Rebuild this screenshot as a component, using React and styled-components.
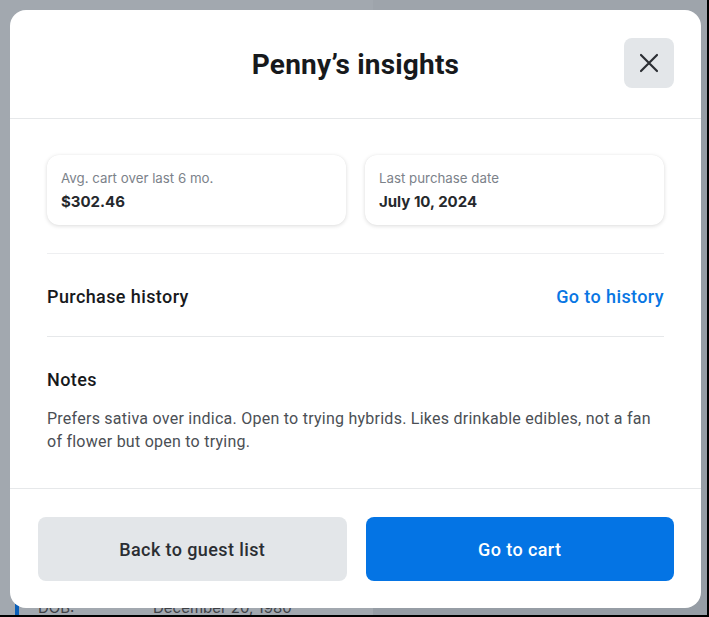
import React from "react";
import styled, { createGlobalStyle } from "styled-components";

const Global = createGlobalStyle`
  html, body { margin: 0; padding: 0; background: #000; }
  body { font-family: Roboto, "Liberation Sans", sans-serif; }
  * { box-sizing: border-box; }
`;

const Screen = styled.div`
  width: 707px;
  height: 615px;
  position: relative;
  overflow: hidden;
  background: #9ea4ab;
`;

const PageBehind = styled.div`
  position: absolute;
  inset: 0;
  display: flex;
`;

const BehindMain = styled.div`
  width: 373px;
  display: flex;
  flex-direction: column;
  justify-content: flex-end;
  background: #a2a8af;
`;

const BehindSide = styled.div`
  flex: 1;
  margin-top: 50px;
  background: #969da5;
`;

const BehindRow = styled.div`
  display: flex;
  align-items: flex-end;
  height: 15px;
  border-left: 4px solid #0b5fb8;
  margin-left: 15px;
  font-family: Inter, sans-serif;
  font-size: 15px;
  color: #3d4045;
  line-height: 15px;
  overflow: hidden;
`;

const BehindLabel = styled.span`
  width: 134px;
  padding-left: 19px;
`;

const BehindValue = styled.span``;

const Modal = styled.div`
  position: absolute;
  left: 10px;
  top: 10px;
  width: 691px;
  height: 598px;
  background: #fff;
  border-radius: 16px;
  display: flex;
  flex-direction: column;
  overflow: hidden;
`;

const Header = styled.header`
  height: 109px;
  flex-shrink: 0;
  border-bottom: 1px solid #e6e8ea;
  display: flex;
  align-items: center;
  justify-content: center;
  position: relative;
`;

const Title = styled.h1`
  margin: 0;
  font-size: 28px;
  font-weight: 700;
  color: #17191c;
  letter-spacing: 0.2px;
`;

const CloseButton = styled.button`
  position: absolute;
  right: 27px;
  top: 28px;
  width: 50px;
  height: 50px;
  border: none;
  border-radius: 8px;
  background: #e3e6e9;
  display: flex;
  align-items: center;
  justify-content: center;
  padding: 0;
`;

const Body = styled.div`
  flex: 1;
  padding: 36px 37px 0;
  display: flex;
  flex-direction: column;
`;

const Cards = styled.div`
  display: grid;
  grid-template-columns: 1fr 1fr;
  gap: 19px;
  padding-bottom: 28px;
  border-bottom: 1px solid #eeeff1;
`;

const Card = styled.div`
  height: 70px;
  border-radius: 12px;
  background: #fff;
  box-shadow: 0 1px 4px rgba(0, 0, 0, 0.14), 0 0 1px rgba(0, 0, 0, 0.06);
  padding: 15px 14px 0;
  font-family: Inter, sans-serif;
`;

const CardLabel = styled.div`
  font-size: 13.3px;
  color: #7c828a;
  line-height: 16px;
`;

const CardValue = styled.div`
  margin-top: 7px;
  font-size: 15px;
  font-weight: 700;
  color: #25282c;
  line-height: 18px;
`;

const Row = styled.div`
  height: 83px;
  display: flex;
  align-items: center;
  justify-content: space-between;
  border-bottom: 1px solid #e6e8ea;
  padding-top: 3px;
`;

const SectionTitle = styled.div`
  font-size: 18px;
  font-weight: 500;
  letter-spacing: 0.4px;
  color: #17191c;
`;

const Link = styled.a`
  font-size: 18px;
  font-weight: 500;
  letter-spacing: 0.4px;
  color: #0876e3;
  text-decoration: none;
`;

const Notes = styled.div`
  padding-top: 32px;
`;

const NotesText = styled.p`
  margin: 17px 0 0;
  font-size: 16px;
  letter-spacing: 0.25px;
  line-height: 23px;
  color: #4b4f55;
`;

const Footer = styled.footer`
  height: 120px;
  flex-shrink: 0;
  border-top: 1px solid #e6e8ea;
  display: grid;
  grid-template-columns: 1fr 1fr;
  gap: 19px;
  padding: 28px 27px 0 28px;
`;

const Button = styled.button`
  height: 64px;
  border: none;
  border-radius: 8px;
  font-family: Roboto, sans-serif;
  font-size: 18px;
  font-weight: 500;
  letter-spacing: 0.4px;
  background: ${(p) => (p.$primary ? "#0474e4" : "#e3e6e9")};
  color: ${(p) => (p.$primary ? "#ffffff" : "#2b2e33")};
`;

export default function App() {
  return (
    <>
      <Global />
      <Screen>
        <PageBehind>
          <BehindMain>
            <BehindRow>
              <BehindLabel>DOB:</BehindLabel>
              <BehindValue>December 20, 1980</BehindValue>
            </BehindRow>
          </BehindMain>
          <BehindSide />
        </PageBehind>
        <Modal>
          <Header>
            <Title>Penny’s insights</Title>
            <CloseButton aria-label="Close">
              <svg width="22" height="22" viewBox="0 0 22 22" fill="none">
                <path d="M3 3L19 19M19 3L3 19" stroke="#2b2e33" strokeWidth="2.2" strokeLinecap="round" />
              </svg>
            </CloseButton>
          </Header>
          <Body>
            <Cards>
              <Card>
                <CardLabel>Avg. cart over last 6 mo.</CardLabel>
                <CardValue>$302.46</CardValue>
              </Card>
              <Card>
                <CardLabel>Last purchase date</CardLabel>
                <CardValue>July 10, 2024</CardValue>
              </Card>
            </Cards>
            <Row>
              <SectionTitle>Purchase history</SectionTitle>
              <Link href="#">Go to history</Link>
            </Row>
            <Notes>
              <SectionTitle>Notes</SectionTitle>
              <NotesText>
                Prefers sativa over indica. Open to trying hybrids. Likes drinkable edibles, not a fan of flower but open to trying.
              </NotesText>
            </Notes>
          </Body>
          <Footer>
            <Button>Back to guest list</Button>
            <Button $primary>Go to cart</Button>
          </Footer>
        </Modal>
      </Screen>
    </>
  );
}
